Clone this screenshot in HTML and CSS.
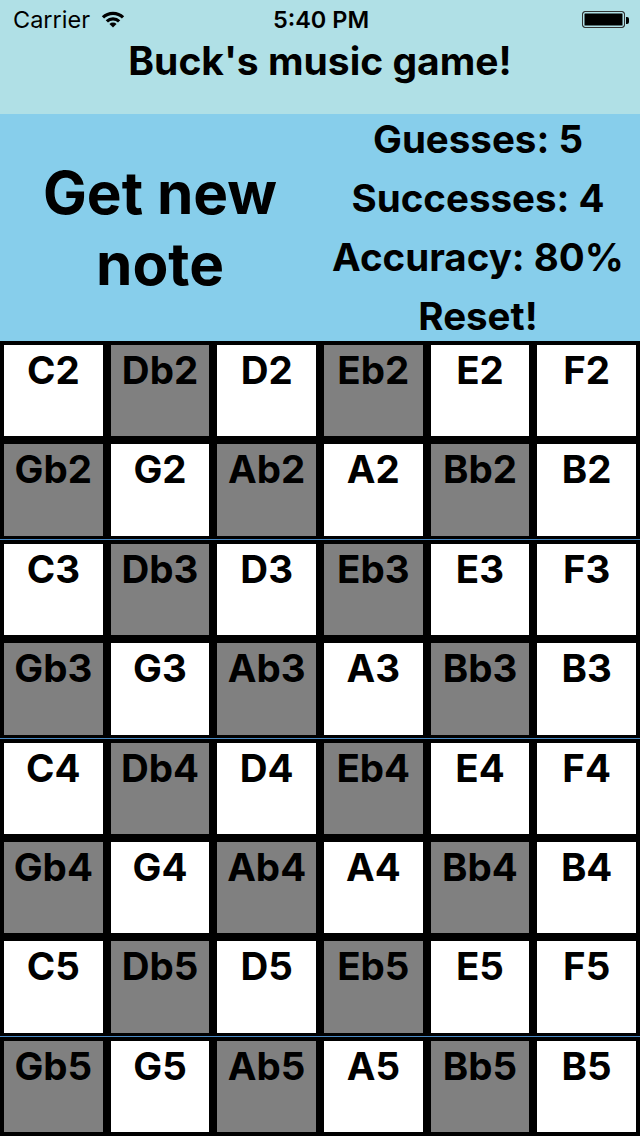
FILE: index.html
```html
<!DOCTYPE html>
<html>
<head>
  <title>Buck's music game!</title>
  <link rel="stylesheet" href="styles.css">
</head>
<body>
  <div id="screen">
    <div id="header">
      <div class="status-bar">
        <div class="carrier">
          Carrier
          <svg class="wifi" width="24" height="17" viewBox="0 0 24 17">
            <path d="M1.96 6.46 A14.2 14.2 0 0 1 22.04 6.46" fill="none" stroke="#000" stroke-width="3.2"/>
            <path d="M5.85 10.35 A8.7 8.7 0 0 1 18.15 10.35" fill="none" stroke="#000" stroke-width="3.2"/>
            <path d="M12 16.5 L8.46 12.96 A5 5 0 0 1 15.54 12.96 Z" fill="#000"/>
          </svg>
        </div>
        <div class="clock">5:40 PM</div>
        <div class="battery"><div class="battery-level"></div></div>
      </div>
      <h1>Buck's music game!</h1>
    </div>

    <div id="panel">
      <div class="new-note">Get new<br>note</div>
      <div class="stats">
        <div class="stat">Guesses: 5</div>
        <div class="stat">Successes: 4</div>
        <div class="stat">Accuracy: 80%</div>
        <div class="stat">Reset!</div>
      </div>
    </div>

    <div id="keyboard"></div>
  </div>

  <script>
  const keyboard = document.getElementById('keyboard');
  const octaves = [2, 3, 4, 5];
  const rows = [
    ['C', 'Db', 'D', 'Eb', 'E', 'F'],
    ['Gb', 'G', 'Ab', 'A', 'Bb', 'B']
  ];
  // rows that get the thin blue divider on top
  const dividers = [2, 4, 7];

  let rowIndex = 0;
  octaves.forEach(octave => {
    rows.forEach(names => {
      const row = document.createElement('div');
      row.className = 'key-row' + (dividers.includes(rowIndex) ? ' divider' : '');
      row.innerHTML = names.map(name => {
        const sharp = name.length > 1 ? ' black' : '';
        return `<div class="key${sharp}">${name}${octave}</div>`;
      }).join('');
      keyboard.appendChild(row);
      rowIndex++;
    });
  });
  </script>
</body>
</html>
```

FILE: styles.css
```css
body {
  margin: 0;
  padding: 0;
  font-family: Inter, "Liberation Sans", Arial, sans-serif;
  color: #000;
  background-color: #000;
}
#screen {
  width: 640px;
  height: 1136px;
  overflow: hidden;
  display: flex;
  flex-direction: column;
}
#header {
  height: 114px;
  background-color: #b0e0e6;
}
.status-bar {
  height: 38px;
  display: flex;
  align-items: center;
  justify-content: space-between;
  padding: 0 11px 0 13px;
  font-size: 23.5px;
}
.carrier {
  flex: 1;
  display: flex;
  align-items: center;
  gap: 11px;
}
.clock {
  font-weight: 600;
}
.battery {
  flex: 1;
  display: flex;
  justify-content: flex-end;
  position: relative;
}
.battery-level {
  width: 41px;
  height: 15px;
  border: 1.5px solid #333;
  border-radius: 3px;
  background-color: #000;
  box-shadow: inset 0 0 0 1.5px #b0e0e6;
  margin-right: 4px;
}
.battery::after {
  content: "";
  position: absolute;
  right: 0;
  top: 6px;
  width: 3px;
  height: 7px;
  background-color: #000;
  border-radius: 0 2px 2px 0;
}
h1 {
  margin: 0;
  text-align: center;
  font-size: 39px;
  line-height: 46px;
  font-weight: 700;
}
#panel {
  height: 227px;
  background-color: #87ceeb;
  display: flex;
}
.new-note {
  width: 320px;
  display: flex;
  align-items: center;
  justify-content: center;
  text-align: center;
  font-size: 58.5px;
  line-height: 71px;
  font-weight: 700;
}
.stats {
  width: 316px;
  display: flex;
  flex-direction: column;
  align-items: center;
  gap: 13px;
  padding-top: 1.5px;
  font-size: 38.5px;
  font-weight: 700;
}
#keyboard {
  flex: 1;
  display: flex;
  flex-direction: column;
}
.key-row {
  flex: 1;
  display: grid;
  grid-template-columns: repeat(6, 1fr);
  position: relative;
}
.key-row.divider::before {
  content: "";
  position: absolute;
  left: 0;
  right: 0;
  top: -1px;
  height: 1px;
  background-color: #4a8ac4;
}
.key {
  box-sizing: border-box;
  border: 4px solid #000;
  background-color: #fff;
  text-align: center;
  font-size: 38.5px;
  line-height: 1;
  font-weight: 700;
  padding-top: 6px;
}
.key.black {
  background-color: #808080;
}
```
